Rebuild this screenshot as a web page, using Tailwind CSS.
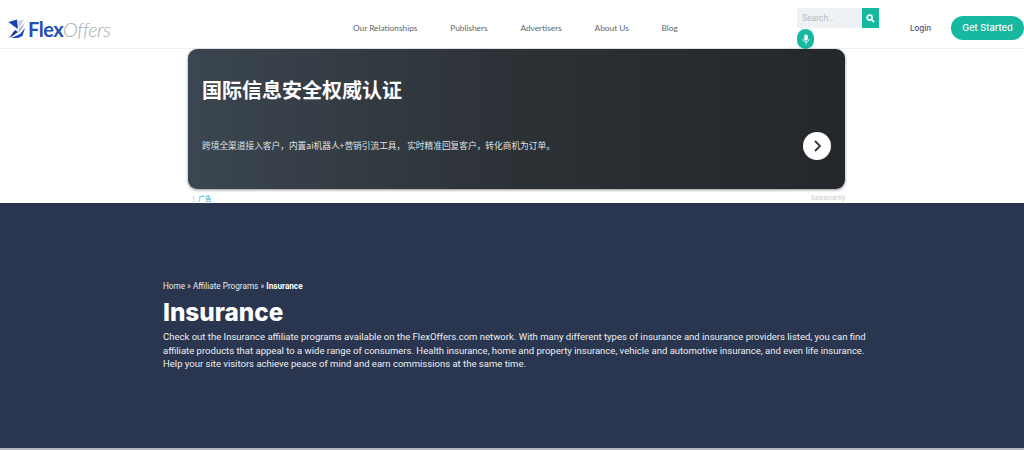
<!DOCTYPE html>
<html lang="en">
<head>
<meta charset="utf-8">
<script src="https://cdn.jsdelivr.net/npm/@tailwindcss/browser@4"></script>
<title>FlexOffers</title>
</head>
<body class="bg-white overflow-hidden font-['Roboto',sans-serif]">
<div class="w-[1024px] h-[450px] flex flex-col overflow-hidden">
  <header class="h-[49px] shrink-0 border-b border-[#eeeeee] flex relative">
    <a class="w-[340px] pl-[8px] pt-[19px] flex items-start gap-0">
      <svg width="19" height="20" viewBox="0 0 19 20" class="shrink-0">
        <path d="M0.5 3 L9 0.5 L10 10 L5.5 7 Z" fill="#1c3fa8"/>
        <path d="M10 2 L16 1 L11 9 Z" fill="#c7d0e6"/>
        <path d="M11 10 L17 3.5 L13 11 L10 14 Z" fill="#9fb0d8"/>
        <path d="M1 19 L7 11 L10 13 L6 16 Z" fill="#17339a"/>
        <path d="M3 19 L12 15 L17 9 L14.5 17 L10 19 Z" fill="#2149bd"/>
      </svg>
      <span class="text-[20px] leading-[20px] tracking-[-0.5px] ml-[1px] font-['Lato',sans-serif]"><span class="font-bold text-[#2450b8]">Flex</span><span class="italic font-light text-[#a9adb2]">Offers</span></span>
    </a>
    <nav class="flex pl-[13px] pt-[21px] gap-[32.8px] leading-[14px] text-[#5f6468] font-['Lato',sans-serif] w-[457px]">
      <a class="text-[8.3px]">Our Relationships</a>
      <a class="text-[8.3px]">Publishers</a>
      <a class="text-[8.3px]">Advertisers</a>
      <a class="text-[8.3px]">About Us</a>
      <a class="text-[8.3px]">Blog</a>
    </nav>
    <div class="relative w-[82px] pt-[8px]">
      <div class="flex h-[20px] w-[82px]">
        <div class="w-[65px] bg-[#eef2f5] text-[8.5px] leading-[20px] pl-[5px] text-[#b3bac2]">Search...</div>
        <div class="w-[17px] h-[20px] bg-[#17b8a0] flex items-center justify-center">
          <svg width="9" height="9" viewBox="0 0 10 10" fill="none" stroke="white" stroke-width="1.8"><circle cx="4" cy="4" r="2.8"/><path d="M6.2 6.2 L9 9"/></svg>
        </div>
      </div>
      <div class="w-[17px] h-[20px] mt-[1px] rounded-full bg-[#17b8a0] flex items-center justify-center">
        <svg width="8" height="11" viewBox="0 0 8 11" fill="none"><rect x="2.2" y="0.5" width="3.6" height="6.2" rx="1.8" fill="white"/><path d="M1 5 C1 9 7 9 7 5 M4 8 V10.5" stroke="white" stroke-width="0.8"/></svg>
      </div>
    </div>
    <a class="ml-[31px] pt-[21px] text-[8px] leading-[14px] font-medium text-[#4a4f7c] font-['Inter',sans-serif]">Login</a>
    <a class="absolute left-[951px] top-[16px] w-[73px] h-[24px] rounded-full bg-[#17b8a0] text-white text-[9.3px] font-medium leading-[24px] text-center font-['Inter',sans-serif]">Get Started</a>
  </header>

  <section class="h-[154px] shrink-0 pl-[188px] relative">
    <div class="w-[657px] h-[140px] rounded-[9px] bg-gradient-to-r from-[#3b4650] via-[#2c3136] to-[#24272b] shadow-[0_1px_3px_rgba(0,0,0,0.45)] flex flex-col pl-[14px] pr-[14px]">
      <h2 class="mt-[28px] text-[20px] leading-[26px] font-bold text-white font-['Noto_Sans_CJK_SC',sans-serif]">国际信息安全权威认证</h2>
      <div class="mt-[29px] flex items-center justify-between">
        <p class="text-[8.7px] leading-[14px] text-[#dfe2e5] font-['Noto_Sans_CJK_SC',sans-serif] mt-[-1px]">跨境全渠道接入客户，内置ai机器人+营销引流工具， 实时精准回复客户，转化商机为订单。</p>
        <div class="w-[28px] h-[28px] rounded-full bg-white flex items-center justify-center">
          <svg width="12" height="14" viewBox="0 0 12 14" fill="none" stroke="#33373b" stroke-width="1.8"><path d="M4 2 L9 7 L4 12"/></svg>
        </div>
      </div>
    </div>
    <div class="flex justify-between w-[657px] mt-[5px] text-[6.5px] leading-[9px]">
      <span class="text-[#2aa7b8] pl-[2px] font-['Noto_Sans_CJK_SC',sans-serif]">⋮ 广告</span>
      <span class="text-[#c9cbce]">Salesmartly</span>
    </div>
  </section>

  <section class="h-[245px] shrink-0 bg-[#2a354f] pl-[163px] pt-[77px] text-white">
    <p class="text-[8.2px] leading-[12px] text-[#e8eaee]">Home » Affiliate Programs » <b class="font-bold text-white">Insurance</b></p>
    <h1 class="mt-[5px] text-[24.3px] leading-[30px] font-extrabold font-['Inter',sans-serif]">Insurance</h1>
    <p class="mt-[3px] w-[710px] text-[9.52px] leading-[13.5px] text-[#eceef2]">Check out the Insurance affiliate programs available on the FlexOffers.com network. With many different types of insurance and insurance providers listed, you can find affiliate products that appeal to a wide range of consumers. Health insurance, home and property insurance, vehicle and automotive insurance, and even life insurance. Help your site visitors achieve peace of mind and earn commissions at the same time.</p>
  </section>
  <div class="h-[2px] bg-[#b4b8bf]"></div>
</div>
</body>
</html>
